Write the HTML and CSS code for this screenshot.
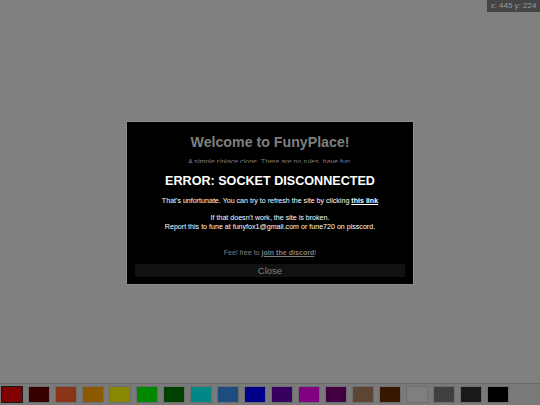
FILE: index.html
```html
<!DOCTYPE html>
<html>
<head>
<meta charset="utf-8">
<link rel="stylesheet" href="styles.css">
</head>
<body>
<div class="coords">x: 445 y: 224</div>
<div class="overlay">
  <div class="modal">
    <h1 class="title">Welcome to FunyPlace!</h1>
    <p class="intro">A simple r/place clone. There are no rules, have fun.</p>
    <div class="spacer"></div>
    <p class="discord">Feel free to <a class="lnk">join the discord</a>!</p>
    <div class="close">Close</div>
    <div class="error">
      <h2 class="err-title">ERROR: SOCKET DISCONNECTED</h2>
      <p class="err-text">That's unfortunate. You can try to refresh the site by clicking <a class="lnk">this link</a></p>
      <p class="err-text">If that doesn't work, the site is broken.<br>Report this to fune at funyfox1@gmail.com or fune720 on pisscord.</p>
    </div>
  </div>
</div>
<div class="palette">
  <div class="sw sel" style="background:#7f0000"></div>
  <div class="sw" style="background:#370000"></div>
  <div class="sw" style="background:#8a3418"></div>
  <div class="sw" style="background:#8c5800"></div>
  <div class="sw" style="background:#898800"></div>
  <div class="sw" style="background:#008800"></div>
  <div class="sw" style="background:#004000"></div>
  <div class="sw" style="background:#008888"></div>
  <div class="sw" style="background:#1e4c7e"></div>
  <div class="sw" style="background:#00008a"></div>
  <div class="sw" style="background:#38005e"></div>
  <div class="sw" style="background:#800080"></div>
  <div class="sw" style="background:#420042"></div>
  <div class="sw" style="background:#5e4434"></div>
  <div class="sw" style="background:#381600"></div>
  <div class="sw" style="background:#7f7f7f"></div>
  <div class="sw" style="background:#404040"></div>
  <div class="sw" style="background:#191919"></div>
  <div class="sw" style="background:#000000"></div>
</div>
</body>
</html>
```
FILE: styles.css
```css
html, body {
  margin: 0;
  padding: 0;
  width: 540px;
  height: 405px;
  overflow: hidden;
  background: #808080;
  font-family: "Liberation Sans", Arial, sans-serif;
}
.coords {
  position: absolute;
  top: 0;
  right: 0;
  width: 53px;
  height: 12px;
  background: #444444;
  color: #9a9a9a;
  font-size: 8px;
  line-height: 12px;
  text-align: center;
}
.overlay {
  position: absolute;
  left: 0;
  top: 0;
  width: 540px;
  height: 405px;
  display: flex;
  align-items: center;
  justify-content: center;
}
.modal {
  position: relative;
  background: #000;
  border: 1px solid #8c8c8c;
  display: flex;
  flex-direction: column;
  align-items: center;
  padding: 0 8px;
  box-sizing: border-box;
  width: 288px;
  height: 164px;
}
.title {
  margin: 11px 0 0;
  font-size: 14.2px;
  font-weight: bold;
  color: #7f7f7f;
  line-height: 18px;
}
.intro {
  margin: 7px 0 0;
  font-size: 7.1px;
  line-height: 8px;
  color: #7f7f7f;
}
.spacer { flex: 1; }
.discord {
  margin: 0 0 7px;
  font-size: 7.1px;
  line-height: 8px;
  color: #7f7f7f;
}
.lnk {
  font-weight: bold;
  text-decoration: underline;
}
.close {
  align-self: stretch;
  height: 13px;
  margin-bottom: 7px;
  background: #111111;
  color: #7f7f7f;
  font-size: 9.5px;
  line-height: 13px;
  text-align: center;
}
.error {
  position: absolute;
  left: 0;
  right: 0;
  top: 41px;
  height: 76px;
  background: #000;
  display: flex;
  flex-direction: column;
  align-items: center;
  color: #ffffff;
}
.err-title {
  margin: 10px 0 0;
  font-size: 12.6px;
  line-height: 16px;
  font-weight: bold;
}
.err-text {
  margin: 8px 0 0;
  font-size: 7.1px;
  line-height: 9px;
  text-align: center;
}
.palette {
  position: absolute;
  left: 0;
  bottom: 0;
  width: 540px;
  height: 22px;
  border-top: 1px solid #6a6a6a;
  box-sizing: border-box;
  background: #7a7a7a;
  display: flex;
  align-items: center;
  gap: 5px;
  padding-left: 1px;
}
.sw {
  width: 22px;
  height: 17px;
  box-sizing: border-box;
  border: 1px solid #6e6e6e;
}
.sw.sel {
  border-color: #1a1a1a;
}
```
